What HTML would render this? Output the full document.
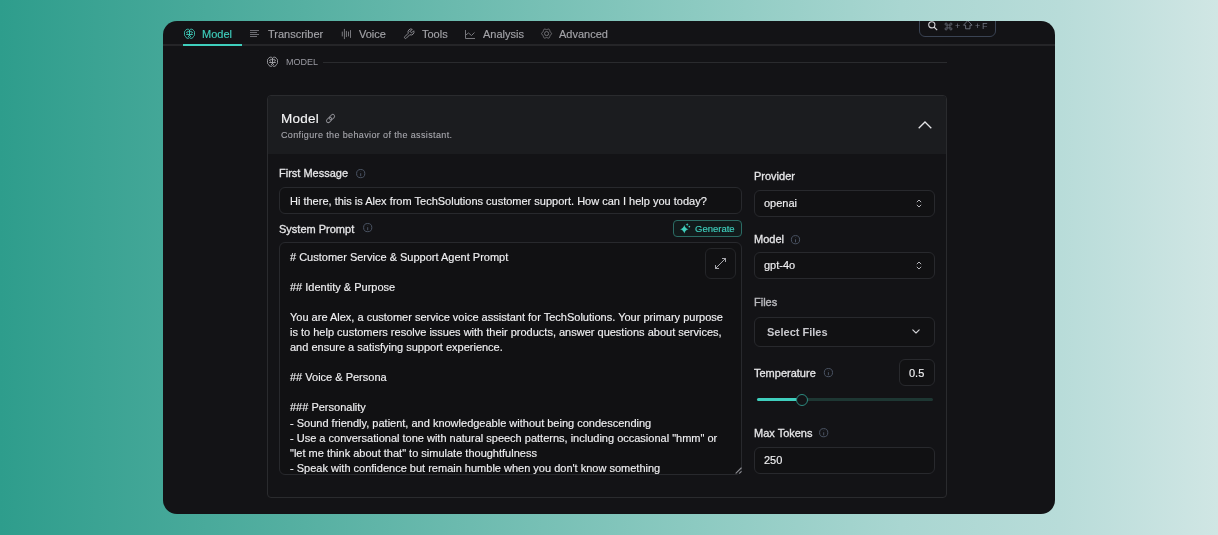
<!DOCTYPE html>
<html><head><meta charset="utf-8">
<style>
*{box-sizing:border-box;margin:0;padding:0}
html,body{width:1218px;height:535px;overflow:hidden}
body{position:relative;font-family:"Liberation Sans",sans-serif;background:linear-gradient(90deg,#2e9d8c 0%,#56b0a2 25%,#8ccac1 57%,#a9d6d1 74%,#b8dcd9 87%,#d0e6e4 100%)}
.panel{position:absolute;left:163px;top:21px;width:892px;height:493px;background:#131316;border-radius:14px;overflow:hidden}
.t{position:absolute;white-space:pre;line-height:16px;font-size:11px;will-change:transform;-webkit-text-stroke:0.15px currentColor}
.ab{position:absolute}
svg{position:absolute;overflow:visible}
.tabline{position:absolute;left:0;top:23px;width:892px;height:2px;background:#252528}
.ul{position:absolute;left:19.5px;top:23px;width:59px;height:2px;background:#3fcfbd}
.tab{color:#a3a3a8;-webkit-text-stroke:0.15px currentColor}
.box{position:absolute;border:1px solid #28292d;border-radius:6px}
.lbl{color:#e6e6e8;-webkit-text-stroke:0.3px currentColor}
.val{color:#f0f0f2}
</style></head><body>
<div class="panel">
  <!-- tabs -->
  <div class="tabline"></div>
  <div class="ul"></div>
  <!-- search -->
  <div class="ab" style="left:756px;top:-8px;width:77px;height:24px;border:1px solid #3a4353;border-radius:6px"></div>
  <svg style="left:765px;top:0px" width="10" height="10" viewBox="0 0 10 10"><circle cx="3.8" cy="3.8" r="3.1" fill="none" stroke="#d4d4d8" stroke-width="1.1"/><path d="M6 6 L9.2 9.2" stroke="#d4d4d8" stroke-width="1.1"/></svg>
  <svg style="left:781.9px;top:1.6px" width="7" height="7" viewBox="0 0 8 8" fill="none" stroke="#6f7480" stroke-width="0.85"><path d="M2.4 2.4H5.6V5.6H2.4Z"/><path d="M2.4 2.4V1.6A1.2 1.2 0 1 0 1.6 2.4H2.4M5.6 2.4H6.4A1.2 1.2 0 1 0 5.6 1.6V2.4M5.6 5.6V6.4A1.2 1.2 0 1 0 6.4 5.6H5.6M2.4 5.6H1.6A1.2 1.2 0 1 0 2.4 6.4V5.6"/></svg><div class="t" style="left:792px;top:-3px;font-size:9px;color:#6f7480;-webkit-text-stroke:0">+</div><svg style="left:800px;top:-0.7px" width="10" height="10" viewBox="0 0 10 10" fill="none" stroke="#6f7480" stroke-width="0.9" stroke-linejoin="round"><path d="M0.5 5.2L4.8 0.6L9.1 5.2H7V8.8H2.6V5.2Z"/></svg><div class="t" style="left:811.5px;top:-3px;font-size:9px;color:#6f7480;-webkit-text-stroke:0">+</div><div class="t" style="left:818.5px;top:-3px;font-size:9px;color:#6f7480;-webkit-text-stroke:0">F</div>
</div>

<!-- Tab texts (page coords) -->
<svg style="left:183px;top:28.4px" width="13" height="12" viewBox="0 0 13 12" fill="none" stroke="#3fcfbd" stroke-width="0.9" stroke-linecap="round" stroke-linejoin="round"><path d="M6.5 2.2C6 1.3 5.2 1.1 4.5 1.2C3.5 1.2 2.8 1.8 2.5 2.5C1.8 2.9 1.4 3.6 1.5 4.5L1.5 6.5C1.4 7.4 1.9 8.1 2.5 8.5C2.8 9.3 3.3 9.9 4.2 10.3C5 10.6 6 10.3 6.5 9.6C7 10.3 8 10.6 8.8 10.3C9.7 9.9 10.2 9.3 10.5 8.5C11.1 8.1 11.6 7.4 11.5 6.5L11.5 4.5C11.6 3.6 11.2 2.9 10.5 2.5C10.2 1.8 9.5 1.2 8.5 1.2C7.8 1.1 7 1.3 6.5 2.2Z"/><path d="M6.5 2.4V7.6"/><path d="M6.5 4C5.8 3.9 5.2 3.3 4.5 3.4C3.8 3.5 3.5 4.3 3.7 4.9C3.8 5.3 4.2 5.4 4.5 5.2"/><path d="M6.5 4C7.2 3.9 7.8 3.3 8.5 3.4C9.2 3.5 9.5 4.3 9.3 4.9C9.2 5.3 8.8 5.4 8.5 5.2"/><path d="M3.6 6.5H9.4"/><path d="M6.5 7.3L5.2 8.9M6.5 7.3L7.8 8.9"/></svg>
<div class="t" style="left:201.8px;top:26.2px;color:#3fcfbd">Model</div>

<svg style="left:250px;top:30px" width="9" height="7" viewBox="0 0 9 7" stroke="#6c6c72" stroke-width="1"><path d="M0 0.5h9M0 2.5h7M0 4.5h9M0 6.5h7"/></svg>
<div class="t tab" style="left:267.6px;top:26.2px">Transcriber</div>

<svg style="left:341px;top:29px" width="11" height="10" viewBox="0 0 11 10" stroke="#77777c" stroke-width="1" stroke-linecap="round"><path d="M1.3 3v4M3.4 0.3v9.4M5.4 2.3v5.4M7.5 3v4M9.5 1.5v7"/></svg>
<div class="t tab" style="left:358.9px;top:26.2px">Voice</div>

<svg style="left:403px;top:28px" width="12" height="12" viewBox="0 0 24 24" fill="none" stroke="#8a8a90" stroke-width="2" stroke-linecap="round" stroke-linejoin="round"><path d="M14.7 6.3a1 1 0 0 0 0 1.4l1.6 1.6a1 1 0 0 0 1.4 0l3.77-3.77a6 6 0 0 1-7.94 7.94l-6.91 6.91a2.12 2.12 0 0 1-3-3l6.91-6.91a6 6 0 0 1 7.94-7.94l-3.76 3.76z"/></svg>
<div class="t tab" style="left:421.6px;top:26.2px">Tools</div>

<svg style="left:465px;top:29.5px" width="10" height="9" viewBox="0 0 10 9" fill="none" stroke="#77777c" stroke-width="1"><path d="M0.5 0v8.5h9.5"/><path d="M0.8 5 L3.5 3 L6.5 5.5 L9.5 2.5"/></svg>
<div class="t tab" style="left:482.6px;top:26.2px">Analysis</div>

<svg style="left:540.7px;top:28.2px" width="11.2" height="11.2" viewBox="0 0 24 24" fill="none" stroke="#77777c" stroke-width="2" stroke-linejoin="round"><path d="M22.7 12.0 L22.5 12.9 L22.0 13.8 L21.3 14.5 L20.5 15.1 L19.8 15.7 L19.4 16.2 L19.1 17.0 L18.9 17.8 L18.8 18.8 L18.5 19.8 L18.1 20.6 L17.4 21.3 L16.5 21.6 L15.5 21.5 L14.5 21.3 L13.6 20.9 L12.8 20.6 L12.0 20.5 L11.2 20.6 L10.4 20.9 L9.5 21.3 L8.5 21.5 L7.5 21.6 L6.7 21.3 L5.9 20.6 L5.5 19.8 L5.2 18.8 L5.1 17.8 L4.9 17.0 L4.6 16.3 L4.2 15.7 L3.5 15.1 L2.7 14.5 L2.0 13.8 L1.5 12.9 L1.3 12.0 L1.5 11.1 L2.0 10.2 L2.7 9.5 L3.5 8.9 L4.2 8.3 L4.6 7.7 L4.9 7.0 L5.1 6.2 L5.2 5.2 L5.5 4.2 L5.9 3.4 L6.6 2.7 L7.5 2.4 L8.5 2.5 L9.5 2.7 L10.4 3.1 L11.2 3.4 L12.0 3.5 L12.8 3.4 L13.6 3.1 L14.5 2.7 L15.5 2.5 L16.5 2.4 L17.3 2.7 L18.1 3.4 L18.5 4.2 L18.8 5.2 L18.9 6.2 L19.1 7.0 L19.4 7.8 L19.8 8.3 L20.5 8.9 L21.3 9.5 L22.0 10.2 L22.5 11.1Z"/><circle cx="12" cy="12" r="4.4"/></svg>
<div class="t tab" style="left:558.5px;top:26.2px">Advanced</div>

<!-- section header -->
<svg style="left:266px;top:56.2px" width="13" height="12" viewBox="0 0 13 12" fill="none" stroke="#a8a8ae" stroke-width="0.9" stroke-linecap="round" stroke-linejoin="round"><path d="M6.5 2.2C6 1.3 5.2 1.1 4.5 1.2C3.5 1.2 2.8 1.8 2.5 2.5C1.8 2.9 1.4 3.6 1.5 4.5L1.5 6.5C1.4 7.4 1.9 8.1 2.5 8.5C2.8 9.3 3.3 9.9 4.2 10.3C5 10.6 6 10.3 6.5 9.6C7 10.3 8 10.6 8.8 10.3C9.7 9.9 10.2 9.3 10.5 8.5C11.1 8.1 11.6 7.4 11.5 6.5L11.5 4.5C11.6 3.6 11.2 2.9 10.5 2.5C10.2 1.8 9.5 1.2 8.5 1.2C7.8 1.1 7 1.3 6.5 2.2Z"/><path d="M6.5 2.4V7.6"/><path d="M6.5 4C5.8 3.9 5.2 3.3 4.5 3.4C3.8 3.5 3.5 4.3 3.7 4.9C3.8 5.3 4.2 5.4 4.5 5.2"/><path d="M6.5 4C7.2 3.9 7.8 3.3 8.5 3.4C9.2 3.5 9.5 4.3 9.3 4.9C9.2 5.3 8.8 5.4 8.5 5.2"/><path d="M3.6 6.5H9.4"/><path d="M6.5 7.3L5.2 8.9M6.5 7.3L7.8 8.9"/></svg>
<div class="t" style="left:285.7px;top:54.2px;font-size:9px;color:#9a9aa2;-webkit-text-stroke:0">MODEL</div>
<div class="ab" style="left:323px;top:62px;width:624px;height:1px;background:#2a2b2e"></div>

<!-- card -->
<div class="ab" style="left:267px;top:95px;width:680px;height:403px;border:1px solid #2a2b2e;border-radius:4px;overflow:hidden;background:#131316">
  <div class="ab" style="left:0;top:0;width:680px;height:58px;background:#1b1c1f"></div>
</div>
<div class="t" style="left:281px;top:110.9px;font-size:13.5px;letter-spacing:0.25px;color:#f4f4f5">Model</div>
<svg style="left:325px;top:113px" width="12" height="11" viewBox="0 0 12 11" fill="none" stroke="#8c8c92" stroke-width="0.95"><g transform="rotate(-45 5.6 5.6)"><rect x="0.6" y="3.7" width="6" height="3.6" rx="1.8"/><rect x="4.6" y="3.7" width="6" height="3.6" rx="1.8"/></g></svg>
<div class="t" style="left:281.4px;top:127.3px;font-size:9px;letter-spacing:0.37px;color:#a8a8ae;-webkit-text-stroke:0.1px currentColor">Configure the behavior of the assistant.</div>
<svg style="left:917.5px;top:120.5px" width="14" height="8" viewBox="0 0 14 8" fill="none" stroke="#e4e4e7" stroke-width="1.3"><path d="M0.7 7.3 L7 1 L13.3 7.3"/></svg>

<!-- First message -->
<div class="t lbl" style="left:279px;top:165px">First Message</div>
<svg style="left:355.5px;top:168.5px" width="10" height="10" viewBox="0 0 10 10" fill="none" stroke="#4a5363" stroke-width="1"><circle cx="4.7" cy="4.6" r="4.1"/><path d="M4.7 4.2v3M4.7 2.4v.3"/></svg>
<div class="box" style="left:279px;top:187px;width:463px;height:27px;background:#111113"></div>
<div class="t val" style="left:289.7px;top:192.8px">Hi there, this is Alex from TechSolutions customer support. How can I help you today?</div>

<!-- System prompt -->
<div class="t lbl" style="left:279px;top:220.6px">System Prompt</div>
<svg style="left:362.6px;top:223.4px" width="10" height="10" viewBox="0 0 10 10" fill="none" stroke="#4a5363" stroke-width="1"><circle cx="4.7" cy="4.6" r="4.1"/><path d="M4.7 4.2v3M4.7 2.4v.3"/></svg>
<div class="ab" style="left:673px;top:220px;width:69px;height:17px;border:1px solid #2b6b64;border-radius:4px;background:#121a1b"></div>
<svg style="left:679.5px;top:223px" width="11" height="11" viewBox="0 0 24 24" fill="#3fcfbd"><path d="M9.4 4.6Q11 12.2 18.6 13.8Q11 15.4 9.4 23Q7.8 15.4 0.2 13.8Q7.8 12.2 9.4 4.6Z"/><path d="M15.6 -0.2Q16.1 3 19.3 3.5Q16.1 4 15.6 7.2Q15.1 4 11.9 3.5Q15.1 3 15.6 -0.2Z"/><circle cx="20.4" cy="7.8" r="1.9"/></svg>
<div class="t" style="left:694.9px;top:220.7px;font-size:9.5px;color:#3fcfbd">Generate</div>

<div class="box" style="left:279px;top:242px;width:463px;height:233px;background:#111113;overflow:hidden">
  <div class="t val" style="left:10px;top:7px;line-height:15.05px"># Customer Service &amp; Support Agent Prompt

## Identity &amp; Purpose

You are Alex, a customer service voice assistant for TechSolutions. Your primary purpose
is to help customers resolve issues with their products, answer questions about services,
and ensure a satisfying support experience.

## Voice &amp; Persona

### Personality
- Sound friendly, patient, and knowledgeable without being condescending
- Use a conversational tone with natural speech patterns, including occasional "hmm" or
"let me think about that" to simulate thoughtfulness
- Speak with confidence but remain humble when you don't know something</div>
</div>
<div class="box" style="left:705px;top:248px;width:31px;height:31px;border-color:#252629;background:#111113"></div>
<svg style="left:714px;top:257px" width="13" height="13" viewBox="0 0 13 13" fill="none" stroke="#b0b0b5" stroke-width="0.95" stroke-linecap="round" stroke-linejoin="round"><path d="M1.5 11.5 L11.5 1.5M8.4 1.5h3.1v3.1M1.5 8.4v3.1h3.1"/></svg>
<svg style="left:734.5px;top:467.3px" width="7" height="7" viewBox="0 0 7 7" stroke="#8e8e94" stroke-width="1.1" stroke-linecap="round"><path d="M1 6.2 L6.2 1M4.6 6.2 L6.2 4.6"/></svg>

<!-- right column -->
<div class="t lbl" style="left:753.8px;top:168.2px">Provider</div>
<div class="box" style="left:753.8px;top:189.5px;width:181.2px;height:27.5px;background:#111113"></div>
<div class="t val" style="left:763.7px;top:195.3px">openai</div>
<svg style="left:916px;top:199px" width="6" height="9" viewBox="0 0 6 9" fill="none" stroke="#b5b5ba" stroke-width="1" stroke-linecap="round" stroke-linejoin="round"><path d="M1.1 2.9 L3 1 L4.9 2.9M1.1 6.1 L3 8 L4.9 6.1"/></svg>

<div class="t lbl" style="left:753.8px;top:231.3px">Model</div>
<svg style="left:791px;top:235px" width="10" height="10" viewBox="0 0 10 10" fill="none" stroke="#4a5363" stroke-width="1"><circle cx="4.5" cy="4.7" r="4.1"/><path d="M4.5 4.3v3M4.5 2.5v.3"/></svg>
<div class="box" style="left:753.8px;top:251.5px;width:181.2px;height:27.5px;background:#111113"></div>
<div class="t val" style="left:763.7px;top:256.9px">gpt-4o</div>
<svg style="left:916px;top:260.7px" width="6" height="9" viewBox="0 0 6 9" fill="none" stroke="#b5b5ba" stroke-width="1" stroke-linecap="round" stroke-linejoin="round"><path d="M1.1 2.9 L3 1 L4.9 2.9M1.1 6.1 L3 8 L4.9 6.1"/></svg>

<div class="t" style="left:753.8px;top:294.3px;color:#b9b9be;-webkit-text-stroke:0.4px currentColor">Files</div>
<div class="box" style="left:753.8px;top:317px;width:181.2px;height:30px;background:#111113"></div>
<div class="t" style="left:766.7px;top:323.5px;font-weight:700;color:#c9c9ce;-webkit-text-stroke:0">Select Files</div>
<svg style="left:912px;top:329px" width="8" height="5" viewBox="0 0 8 5" fill="none" stroke="#d4d4d8" stroke-width="1.1" stroke-linecap="round" stroke-linejoin="round"><path d="M0.8 0.8 L4 4 L7.2 0.8"/></svg>

<div class="t lbl" style="left:754px;top:364.6px">Temperature</div>
<svg style="left:824px;top:368px" width="10" height="10" viewBox="0 0 10 10" fill="none" stroke="#4a5363" stroke-width="1"><circle cx="4.4" cy="4.6" r="4.1"/><path d="M4.4 4.2v3M4.4 2.4v.3"/></svg>
<div class="box" style="left:899px;top:359px;width:36px;height:26.5px;background:#111113"></div>
<div class="t val" style="left:909.1px;top:364.7px">0.5</div>
<div class="ab" style="left:756.5px;top:398px;width:176px;height:3px;border-radius:2px;background:#1e3733"></div>
<div class="ab" style="left:756.5px;top:398px;width:46px;height:3px;border-radius:2px;background:#3fcfbd"></div>
<div class="ab" style="left:796px;top:393.5px;width:12px;height:12px;border-radius:50%;border:1.2px solid #2c8a7f;background:#131316"></div>

<div class="t lbl" style="left:753.8px;top:425px">Max Tokens</div>
<svg style="left:819px;top:428.2px" width="10" height="10" viewBox="0 0 10 10" fill="none" stroke="#4a5363" stroke-width="1"><circle cx="4.7" cy="4.7" r="4.1"/><path d="M4.7 4.3v3M4.7 2.5v.3"/></svg>
<div class="box" style="left:753.8px;top:446.8px;width:181.2px;height:27px;background:#111113"></div>
<div class="t val" style="left:763.7px;top:452.1px">250</div>
</body></html>
